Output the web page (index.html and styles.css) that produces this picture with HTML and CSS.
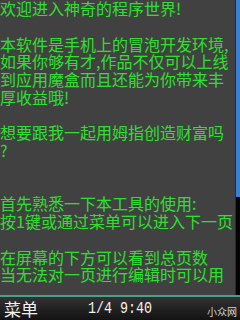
FILE: index.html
```html
<!DOCTYPE html>
<html lang="zh-CN">
<head>
<meta charset="utf-8">
<title>冒泡</title>
<link rel="stylesheet" href="styles.css">
</head>
<body>
<div class="screen">
  <div class="main">
    <div class="content">
      <p class="para"><span class="line">欢迎进入神奇的程序世界!</span></p>
      <p class="para"><span class="line">本软件是手机上的冒泡开发环境,</span><span class="line">如果你够有才,作品不仅可以上线</span><span class="line">到应用魔盒而且还能为你带来丰</span><span class="line">厚收益哦!</span></p>
      <p class="para para-wide"><span class="line">想要跟我一起用姆指创造财富吗</span><span class="line">?</span></p>
      <p class="para"><span class="line">首先熟悉一下本工具的使用:</span><span class="line">按1键或通过菜单可以进入下一页</span></p>
      <p class="para"><span class="line">在屏幕的下方可以看到总页数</span><span class="line">当无法对一页进行编辑时可以用</span></p>
    </div>
    <div class="scrollbar"><div class="thumb"></div></div>
  </div>
  <div class="bar">
    <span class="menu">菜单</span>
    <span class="status">1/4 9:40</span>
    <span class="logo">小众网</span>
  </div>
</div>
</body>
</html>
```
FILE: styles.css
```css
html, body {
  margin: 0;
  padding: 0;
  background: #414141;
}
.screen {
  width: 240px;
  height: 320px;
  display: flex;
  flex-direction: column;
  overflow: hidden;
}
.main {
  flex: 1;
  display: flex;
  min-height: 0;
  background: #414141;
}
.content {
  flex: 1;
  overflow: hidden;
  font-family: "Noto Sans CJK SC", sans-serif;
  font-size: 16px;
  line-height: 17.75px;
  color: #2ee02e;
}
.para {
  margin: 0 0 17.75px 0;
}
.para-wide {
  margin-bottom: 35.5px;
}
.line {
  display: block;
  white-space: nowrap;
}
.scrollbar {
  width: 4px;
  border-left: 1px solid #2a2a2a;
  background: #050505;
}
.thumb {
  height: 197px;
  background: #3a80d6;
}
.bar {
  height: 23px;
  border-top: 2px solid #4f9c88;
  background: linear-gradient(#333333, #121212);
  display: flex;
  align-items: center;
  color: #f2f2f2;
}
.menu {
  font-family: "Noto Sans CJK SC", sans-serif;
  font-size: 17px;
  line-height: 23px;
  margin-left: 4px;
}
.status {
  display: inline-block;
  font-family: "Liberation Mono", monospace;
  font-size: 13.33px;
  line-height: 23px;
  margin-left: 50px;
  transform: scaleY(1.25);
}
.logo {
  margin-left: auto;
  margin-right: 3px;
  margin-top: 6px;
  font-family: "Noto Sans CJK SC", sans-serif;
  font-size: 10px;
  color: #d8d8d8;
}
```
